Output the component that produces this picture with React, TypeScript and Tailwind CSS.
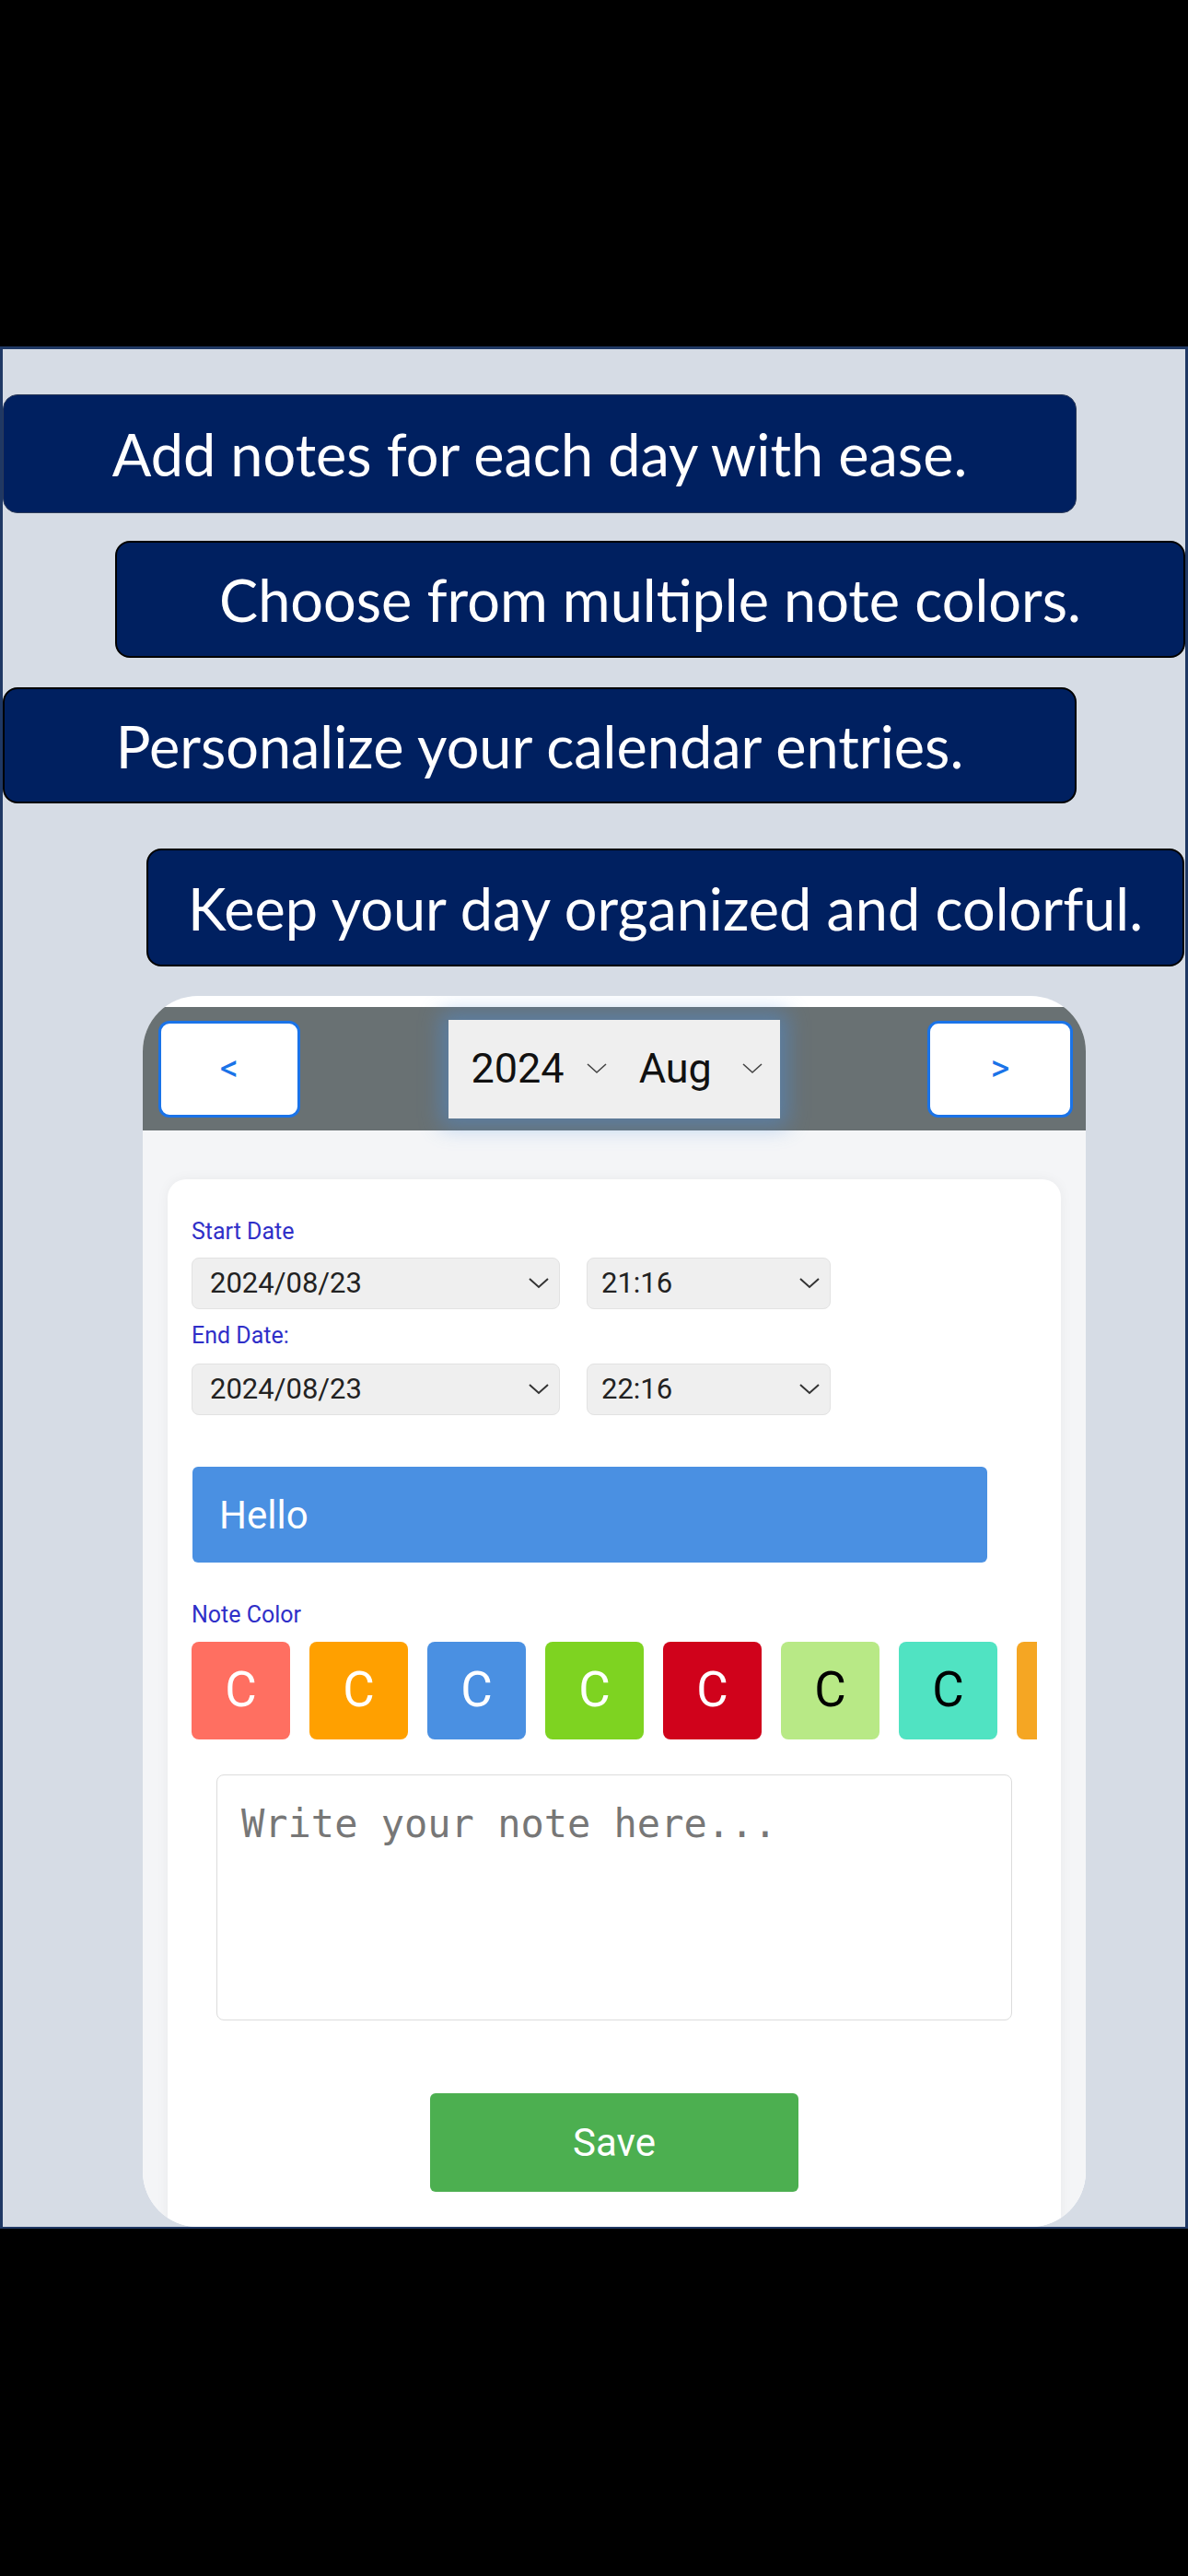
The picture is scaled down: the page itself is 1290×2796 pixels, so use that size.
import React from "react";

const BANNER_FONT = { fontFamily: "Lato, 'Open Sans', sans-serif" };

interface Swatch {
  cls: string;
  label: string;
}

const swatches: Swatch[] = [
  { cls: "bg-[#ff6f61] text-white", label: "C" },
  { cls: "bg-[#ffa000] text-white", label: "C" },
  { cls: "bg-[#4a90e2] text-white", label: "C" },
  { cls: "bg-[#7ed321] text-white", label: "C" },
  { cls: "bg-[#d0021b] text-white", label: "C" },
  { cls: "bg-[#b8e986] text-black", label: "C" },
  { cls: "bg-[#50e3c2] text-black", label: "C" },
  // last one is scrolled off, only its edge shows
  { cls: "bg-[#f5a623] text-white", label: "" },
];

const Chevron = ({ small }: { small?: boolean }) =>
  small ? (
    <svg width="22" height="12" viewBox="0 0 22 12" className="shrink-0">
      <polyline points="1,1 11,10 21,1" fill="none" stroke="#444" strokeWidth="1.6" />
    </svg>
  ) : (
    <svg width="22" height="12" viewBox="0 0 22 12" className="shrink-0">
      <polyline points="1,1 11,10 21,1" fill="none" stroke="#333" strokeWidth="2" />
    </svg>
  );

const FakeSelect = ({ value, className }: { value: string; className: string }) => (
  <div
    className={`${className} h-[56px] flex items-center justify-between pr-[11px] bg-[#efefef] border border-[#e2e2e2] rounded-[8px] text-[31px] text-[#222]`}
  >
    <span>{value}</span>
    <Chevron />
  </div>
);

const Banner = ({ text, className }: { text: string; className: string }) => (
  <div
    className={`flex items-center justify-center bg-[#002060] rounded-[16px] text-white text-[63px] leading-none ${className}`}
    style={BANNER_FONT}
  >
    {text}
  </div>
);

export default function App() {
  return (
    <div className="w-[1290px] h-[2796px] bg-black pt-[376px]">
      <div className="h-[2043px] bg-[#d6dce5] border-t-[3px] border-x-[3px] border-b-[2px] border-[#1f3864] flex flex-col overflow-hidden">
        <Banner
          text="Add notes for each day with ease."
          className="mt-[49px] w-[1166px] h-[129px] border border-[#2c3a58]"
        />
        <Banner
          text="Choose from multiple note colors."
          className="mt-[30px] ml-[122px] w-[1162px] h-[127px] border-2 border-black"
        />
        <Banner
          text="Personalize your calendar entries."
          className="mt-[32px] w-[1166px] h-[126px] border-2 border-black"
        />
        <Banner
          text="Keep your day organized and colorful."
          className="mt-[49px] ml-[156px] w-[1127px] h-[128px] border-2 border-black"
        />

        {/* phone screenshot */}
        <div
          className="mt-[32px] ml-[152px] w-[1024px] flex-1 bg-white rounded-[60px] overflow-hidden flex flex-col pt-[12px]"
          style={{ fontFamily: "Roboto, 'Noto Sans', sans-serif" }}
        >
          <div className="h-[134px] shrink-0 bg-[#697173] flex items-center justify-between pl-[17px] pr-[14px]">
            <button className="w-[154px] h-[105px] bg-white border-[3px] border-[#1a73e8] rounded-[12px] text-[#1a73e8] text-[40px] leading-none">
              &lt;
            </button>
            <div className="relative z-10 w-[360px] h-[107px] bg-[#efefef] shadow-[0_0_22px_8px_rgba(74,144,226,0.45)] flex items-center pl-[25px] pr-[10px] text-[45px] text-[#111]">
              <span>2024</span>
              <span className="ml-[24px]">
                <Chevron small />
              </span>
              <span className="ml-[35px]">Aug</span>
              <span className="ml-[33px]">
                <Chevron small />
              </span>
            </div>
            <button className="w-[158px] h-[105px] bg-white border-[3px] border-[#1a73e8] rounded-[12px] text-[#1a73e8] text-[40px] leading-none">
              &gt;
            </button>
          </div>

          <div className="flex-1 bg-[#f4f5f7] px-[27px] pt-[53px] flex flex-col">
            <div className="flex-1 bg-white rounded-t-[20px] shadow-[0_0_14px_rgba(0,0,0,0.05)] pl-[26px] pt-[43px] flex flex-col">
              <div className="text-[25px] leading-[28px] text-[#2f2fc8]">Start Date</div>
              <div className="mt-[14px] flex gap-[29px]">
                <FakeSelect value="2024/08/23" className="w-[400px] pl-[19px]" />
                <FakeSelect value="21:16" className="w-[265px] pl-[15px]" />
              </div>
              <div className="mt-[15px] text-[25px] leading-[28px] text-[#2f2fc8]">End Date:</div>
              <div className="mt-[16px] flex gap-[29px]">
                <FakeSelect value="2024/08/23" className="w-[400px] pl-[19px]" />
                <FakeSelect value="22:16" className="w-[265px] pl-[15px]" />
              </div>

              <div className="mt-[56px] ml-[1px] w-[863px] h-[104px] bg-[#4a90e2] rounded-[6px] flex items-center pl-[29px] text-white text-[42px]">
                Hello
              </div>

              <div className="mt-[43px] text-[25px] leading-[28px] text-[#2f2fc8]">Note Color</div>
              <div className="mt-[15px] w-[918px] flex gap-[21px] overflow-hidden">
                {swatches.map((s, i) => (
                  <div
                    key={i}
                    className={`w-[107px] h-[106px] shrink-0 rounded-[8px] flex items-center justify-center text-[53px] ${s.cls}`}
                  >
                    {s.label}
                  </div>
                ))}
              </div>

              <div className="mt-[38px] w-[864px] ml-[27px] h-[267px] border border-[#dcdcdc] rounded-[8px] px-[26px] pt-[21px]">
                <span
                  className="text-[42px] text-[#777]"
                  style={{ fontFamily: "'DejaVu Sans Mono', monospace" }}
                >
                  Write your note here...
                </span>
              </div>

              <div className="mt-[79px] flex justify-center pr-[26px]">
                <button className="w-[400px] h-[107px] bg-[#4caf50] rounded-[6px] text-white text-[42px]">
                  Save
                </button>
              </div>
            </div>
          </div>
        </div>
      </div>
    </div>
  );
}
